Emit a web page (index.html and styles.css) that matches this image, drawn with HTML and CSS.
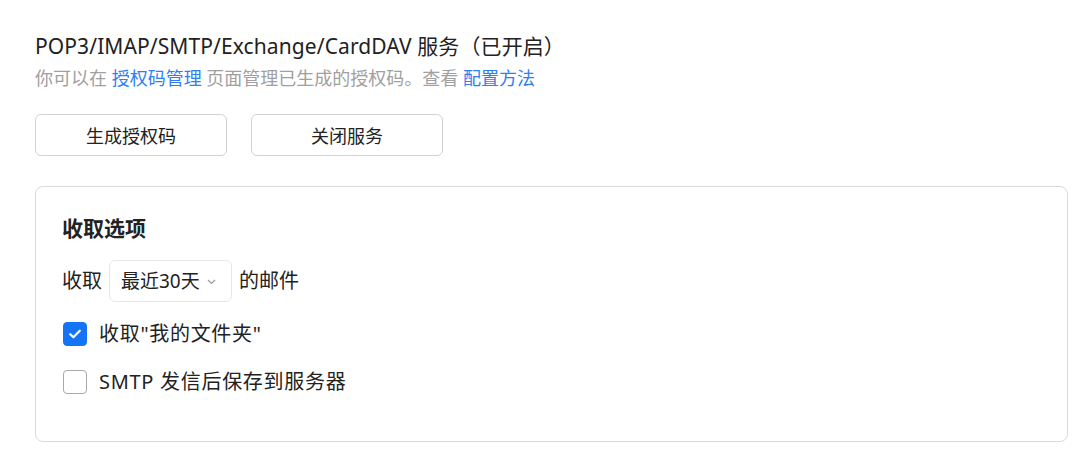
FILE: index.html
```html
<!DOCTYPE html>
<html lang="zh-CN">
<head>
<meta charset="utf-8">
<title>POP3/IMAP/SMTP 服务设置</title>
<link rel="stylesheet" href="styles.css">
</head>
<body>
<main class="page">
  <h1 class="title">POP3/IMAP/SMTP/Exchange/CardDAV 服务（已开启）</h1>
  <p class="desc">你可以在 <a class="link" href="#">授权码管理</a> 页面管理已生成的授权码。查看 <a class="link" href="#">配置方法</a></p>
  <div class="actions">
    <button class="btn" type="button">生成授权码</button>
    <button class="btn" type="button">关闭服务</button>
  </div>
  <section class="card">
    <h2 class="card-title">收取选项</h2>
    <div class="fetch-row">
      <span>收取</span>
      <div class="select">
        <span class="select-text">最近30天</span>
        <svg class="chev" width="9" height="6" viewBox="0 0 9 6"><path d="M1 1l3.5 3.5L8 1" fill="none" stroke="#9a9a9a" stroke-width="1.2"/></svg>
      </div>
      <span>的邮件</span>
    </div>
    <label class="check-row">
      <span class="box checked">
        <svg width="16" height="16" viewBox="0 0 16 16"><path d="M3.2 8.2l3.2 3.1 6.4-6.6" fill="none" stroke="#fff" stroke-width="2.2" stroke-linecap="round" stroke-linejoin="round"/></svg>
      </span>
      <span>收取"我的文件夹"</span>
    </label>
    <label class="check-row">
      <span class="box"></span>
      <span>SMTP 发信后保存到服务器</span>
    </label>
  </section>
</main>
</body>
</html>
```
FILE: styles.css
```css
html, body {
  margin: 0;
  padding: 0;
  background: #ffffff;
}
body {
  font-family: "Noto Sans", "Noto Sans CJK SC", sans-serif;
  color: #222222;
}
.page {
  padding: 32px 17px 0 35px;
}
.title {
  margin: 0;
  font-size: 21px;
  line-height: 28px;
  font-weight: 400;
  letter-spacing: 0.1px;
  color: #222222;
}
.desc {
  margin: 5px 0 0;
  font-size: 18px;
  line-height: 26px;
  color: #a0a0a0;
}
.link {
  color: #2f7ff0;
  text-decoration: none;
}
.actions {
  display: flex;
  gap: 24px;
  margin-top: 23px;
}
.btn {
  width: 192px;
  height: 42px;
  border: 1px solid #d2d2d2;
  border-radius: 6px;
  background: #fff;
  font-family: inherit;
  font-size: 18px;
  color: #222222;
  padding: 0;
}
.card {
  margin-top: 30px;
  border: 1px solid #dadada;
  border-radius: 8px;
  padding: 27px 26px 43px;
}
.card-title {
  margin: 0;
  font-size: 21px;
  line-height: 28px;
  font-weight: 700;
  color: #222222;
}
.fetch-row {
  display: flex;
  align-items: center;
  gap: 7px;
  margin-top: 18px;
  font-size: 20px;
  line-height: 26px;
}
.select {
  display: flex;
  align-items: center;
  gap: 7px;
  height: 42px;
  box-sizing: border-box;
  width: 123px;
  padding: 0 13px 0 11px;
  border: 1px solid #e6e6e6;
  border-radius: 6px;
}
.select-text {
  font-size: 19px;
}
.chev {
  display: block;
  margin-top: 1px;
}
.check-row {
  display: flex;
  align-items: center;
  gap: 12px;
  height: 32px;
  margin-top: 16px;
  font-size: 20px;
  line-height: 26px;
  letter-spacing: 0.7px;
}
.box {
  width: 24px;
  height: 24px;
  box-sizing: border-box;
  border: 1px solid #a8a8a8;
  border-radius: 4px;
  margin-left: 1px;
  display: flex;
  align-items: center;
  justify-content: center;
  background: #fff;
}
.box.checked {
  background: #1574f5;
  border-color: #1574f5;
}
```
